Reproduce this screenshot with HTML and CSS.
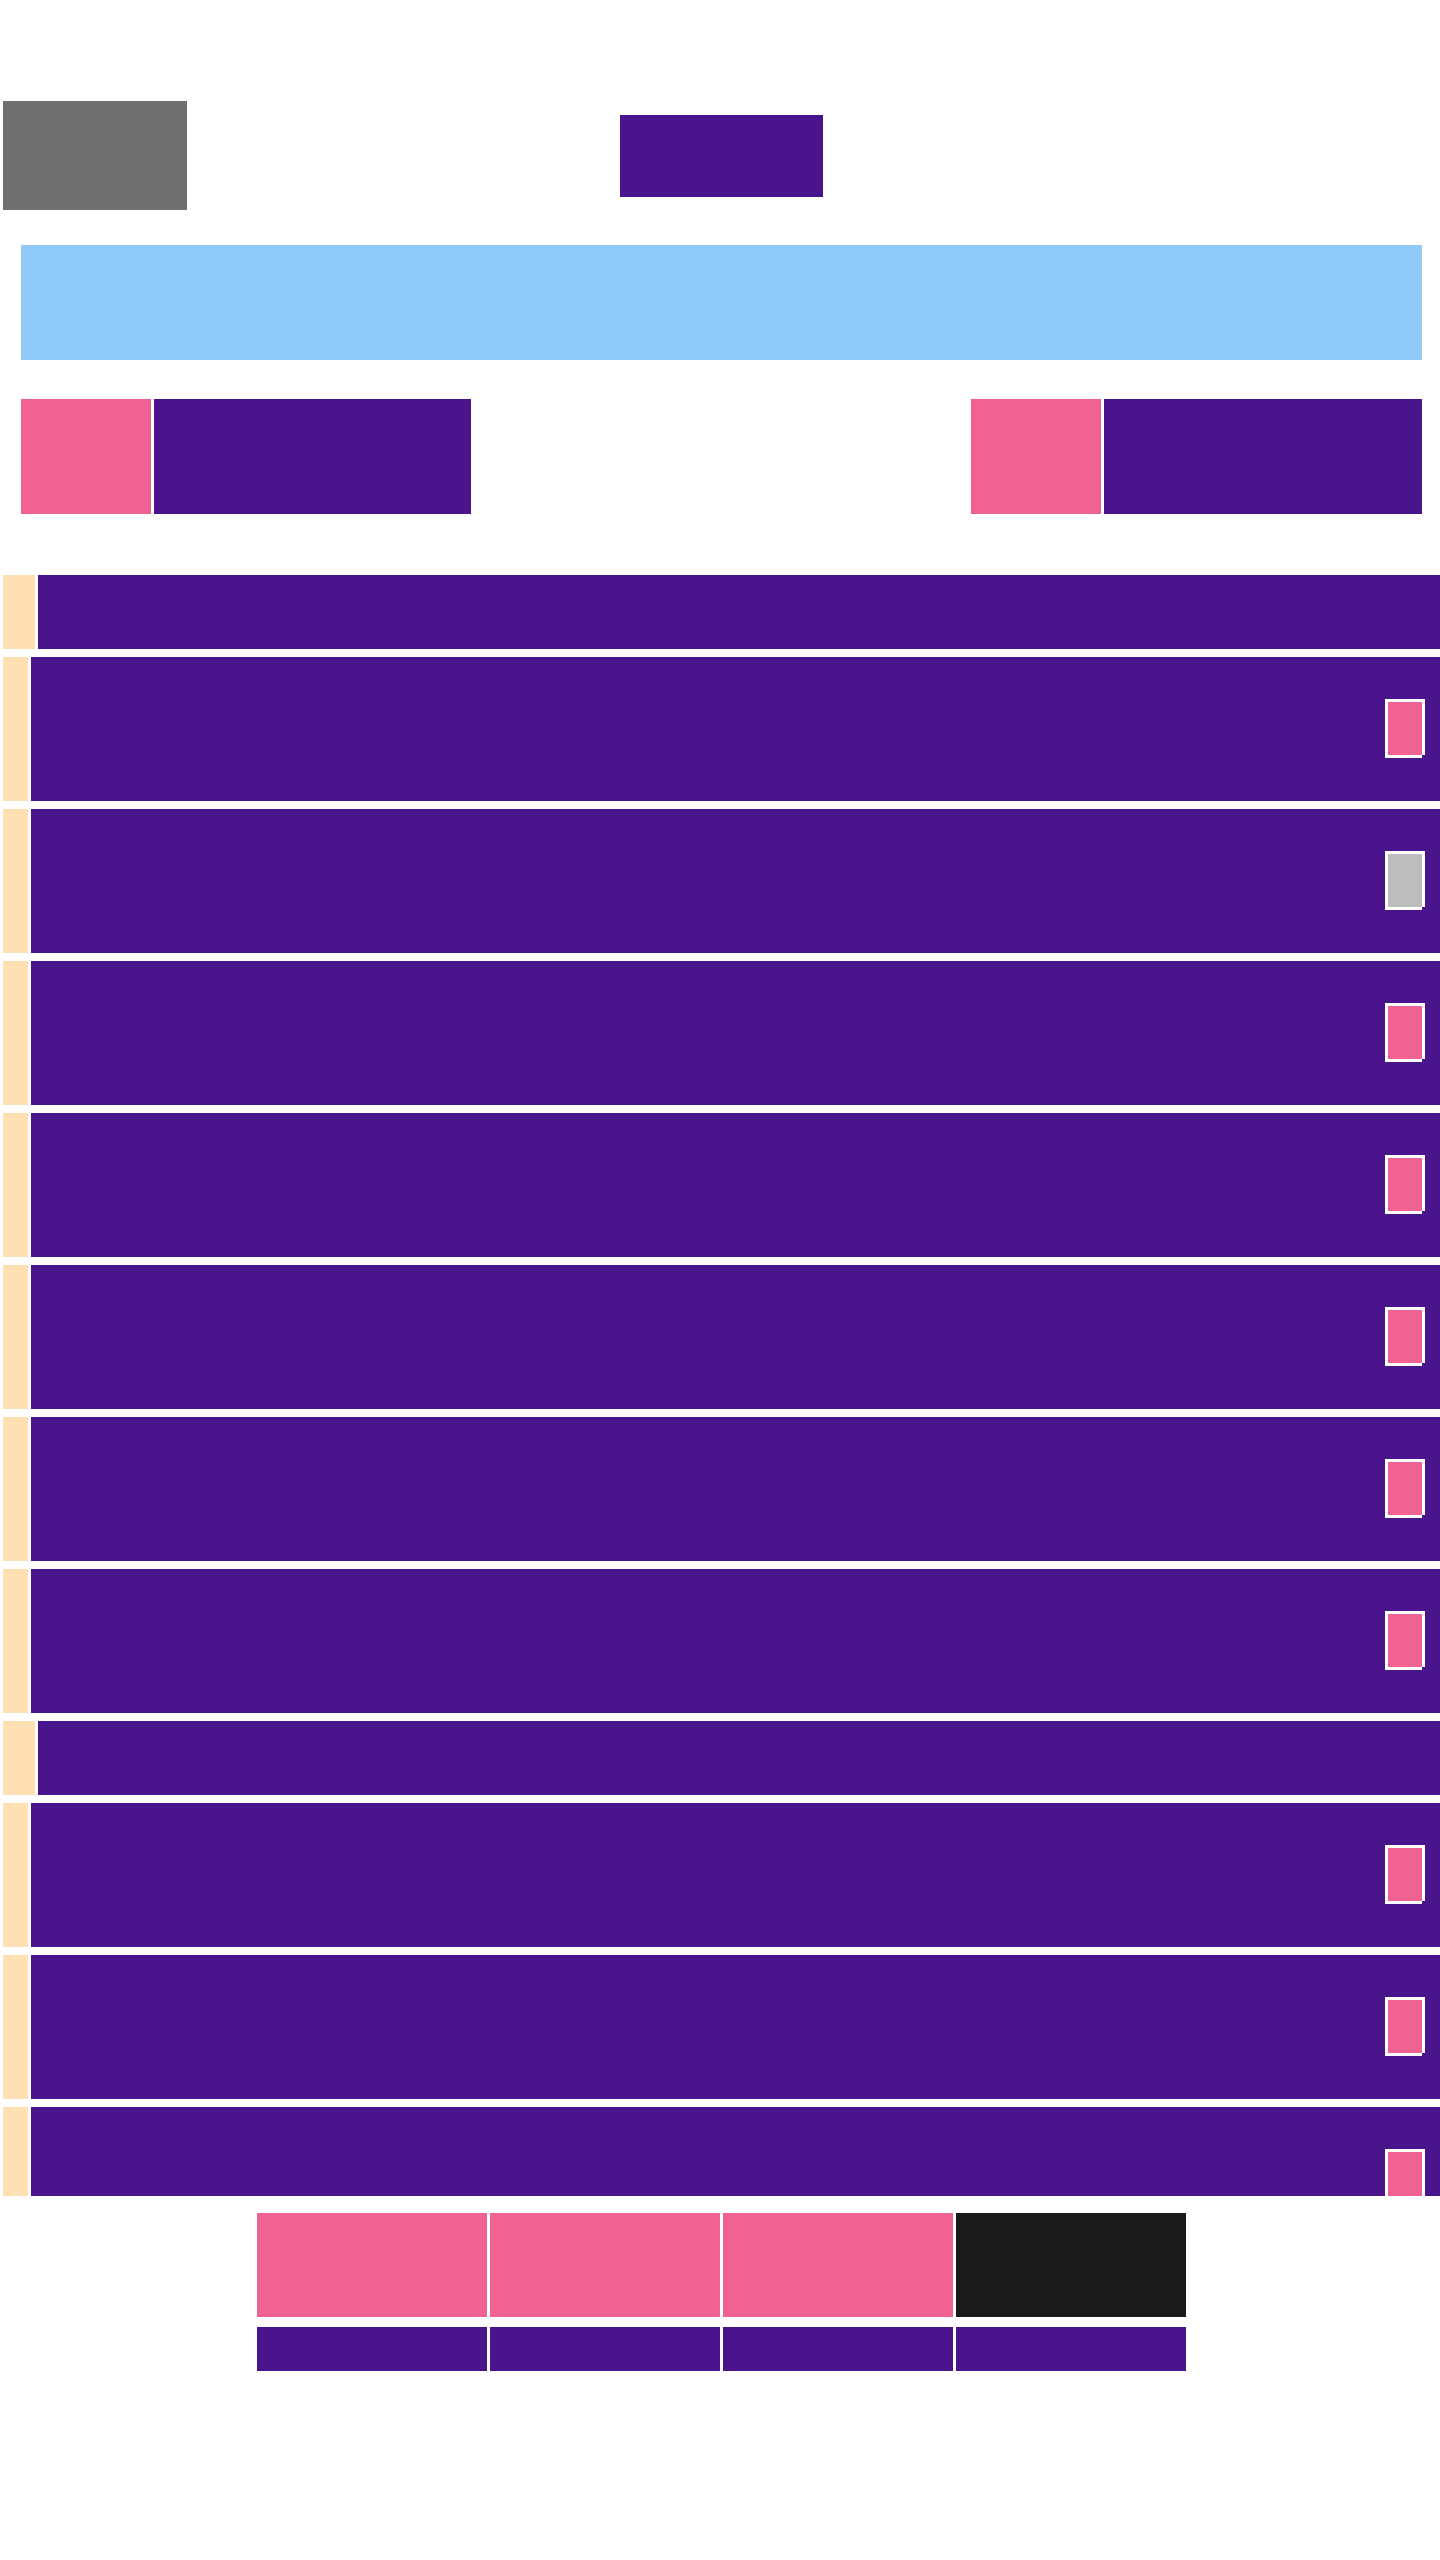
FILE: index.html
```html
<!DOCTYPE html>
<html lang="en">
<head>
<meta charset="utf-8">
<title>Board</title>
<link rel="stylesheet" href="styles.css">
</head>
<body>
<div class="page">
  <header class="topbar">
    <div class="logo"></div>
    <div class="title-block"></div>
    <div class="topbar-spacer"></div>
  </header>

  <section class="intro">
    <div class="banner"></div>
    <div class="stats">
      <div class="stat">
        <div class="stat-badge"></div>
        <div class="stat-body"></div>
      </div>
      <div class="stat">
        <div class="stat-badge"></div>
        <div class="stat-body"></div>
      </div>
    </div>
  </section>

  <div class="list">
    <div class="group-head"><div class="group-mark"></div><div class="group-bar"></div></div>
    <div class="item"><div class="item-mark"></div><div class="item-body"><span class="check"></span></div></div>
    <div class="item"><div class="item-mark"></div><div class="item-body"><span class="check check-off"></span></div></div>
    <div class="item"><div class="item-mark"></div><div class="item-body"><span class="check"></span></div></div>
    <div class="item"><div class="item-mark"></div><div class="item-body"><span class="check"></span></div></div>
    <div class="item"><div class="item-mark"></div><div class="item-body"><span class="check"></span></div></div>
    <div class="item"><div class="item-mark"></div><div class="item-body"><span class="check"></span></div></div>
    <div class="item"><div class="item-mark"></div><div class="item-body"><span class="check"></span></div></div>
    <div class="group-head"><div class="group-mark"></div><div class="group-bar"></div></div>
    <div class="item"><div class="item-mark"></div><div class="item-body"><span class="check"></span></div></div>
    <div class="item"><div class="item-mark"></div><div class="item-body"><span class="check"></span></div></div>
    <div class="item"><div class="item-mark"></div><div class="item-body"><span class="check"></span></div></div>
  </div>

  <nav class="tabs">
    <div class="tab-top"></div>
    <div class="tab-top"></div>
    <div class="tab-top"></div>
    <div class="tab-top tab-top-dark"></div>
    <div class="tab-label"></div>
    <div class="tab-label"></div>
    <div class="tab-label"></div>
    <div class="tab-label"></div>
  </nav>
</div>
</body>
</html>
```

FILE: styles.css
```css
html, body {
  margin: 0;
  padding: 0;
  background: #ffffff;
  font-family: "Roboto", "Liberation Sans", sans-serif;
}

.page {
  padding: 101px 0 0 3px;
  width: 1437px;
}

.topbar {
  display: grid;
  grid-template-columns: 1fr auto 1fr;
  align-items: center;
  height: 109px;
}

.logo {
  width: 184px;
  height: 109px;
  background: #707070;
}

.title-block {
  width: 203px;
  height: 82px;
  background: #4a148c;
}

.intro {
  padding: 0 18px;
}

.banner {
  margin-top: 35px;
  height: 115px;
  background: #90caf9;
}

.stats {
  margin-top: 39px;
  display: flex;
  justify-content: space-between;
}

.stat {
  display: flex;
  gap: 3px;
  height: 115px;
}

.stat-badge {
  width: 130px;
  background: #f06292;
}

.stat-body {
  width: 318px;
  background: #4a148c;
}

.stats .stat:first-child .stat-body {
  width: 317px;
}

.list {
  margin-top: 61px;
  height: 1621px;
  overflow: hidden;
  display: flex;
  flex-direction: column;
  gap: 8px;
}

.group-head {
  flex: none;
  display: flex;
  gap: 3px;
  height: 74px;
}

.group-mark {
  width: 32px;
  background: #ffe0b2;
}

.group-bar {
  flex: 1;
  background: #4a148c;
}

.item {
  flex: none;
  display: flex;
  gap: 3px;
  height: 144px;
}

.item-mark {
  width: 25px;
  background: #ffe0b2;
}

.item-body {
  flex: 1;
  background: #4a148c;
  display: flex;
  align-items: flex-start;
  justify-content: flex-end;
  padding: 45px 18px 0 0;
  box-sizing: border-box;
}

.check {
  display: block;
  width: 34px;
  height: 53px;
  background: #f06292;
  box-shadow:
    3px 0 0 #ffffff,
    0 3px 0 #ffffff,
    -3px -3px 0 #ffffff,
    3px -3px 0 #ffffff,
    -3px 3px 0 #ffffff;
}

.check-off {
  background: #bdbdbd;
}

.tabs {
  margin: 17px auto 0;
  width: 929px;
  display: grid;
  grid-template-columns: repeat(4, 230px);
  grid-template-rows: 104px 44px;
  column-gap: 3px;
  row-gap: 10px;
}

.tab-top {
  background: #f06292;
}

.tab-top-dark {
  background: #1a1a1a;
}

.tab-label {
  background: #4a148c;
}
```
